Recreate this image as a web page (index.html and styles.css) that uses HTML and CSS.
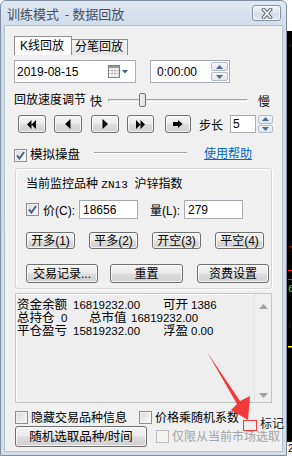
FILE: index.html
```html
<!DOCTYPE html>
<html lang="zh-CN">
<head>
<meta charset="utf-8">
<title>训练模式 - 数据回放</title>
<link rel="stylesheet" href="styles.css">
</head>
<body>
<div class="screen">
  <div class="window">
    <div class="titlebar">
      <span class="title">训练模式  - 数据回放</span>
      <span class="close">
        <svg width="14" height="11" viewBox="0 0 14 11"><path d="M3.5 1.5 L10.5 9.5 M10.5 1.5 L3.5 9.5" stroke="#5f6b7b" stroke-width="3.8" stroke-linecap="round" fill="none"/><path d="M3.5 1.5 L10.5 9.5 M10.5 1.5 L3.5 9.5" stroke="#f7f8fa" stroke-width="1.8" stroke-linecap="round" fill="none"/></svg>
      </span>
    </div>
    <div class="client">
      <div class="tabs">
        <div class="tab active">K线回放</div>
        <div class="tab">分笔回放</div>
      </div>

      <div class="row datetime">
        <div class="field date">
          <span class="val">2019-08-15</span>
          <svg class="cal" width="22" height="14" viewBox="0 0 22 14">
            <rect x="0.5" y="0.5" width="11" height="12" fill="#fff" stroke="#7d7d7d"/>
            <rect x="1" y="1" width="10" height="2" fill="#9a9a9a"/>
            <path d="M1 5.5 H11 M1 8.5 H11 M4 3 V12.5 M7 3 V12.5 M10 3 V12.5" stroke="#c2c2c2" stroke-width="1"/>
            <path d="M14 5 L20 5 L17 8.5 Z" fill="#3d5f94"/>
          </svg>
        </div>
        <div class="field time">
          <span class="val">0:00:00</span>
          <div class="spin">
            <span class="sb"><svg width="7" height="4" viewBox="0 0 7 4"><path d="M0 4 L3.5 0 L7 4 Z" fill="#4a6a97"/></svg></span>
            <span class="sb"><svg width="7" height="4" viewBox="0 0 7 4"><path d="M0 0 L7 0 L3.5 4 Z" fill="#4a6a97"/></svg></span>
          </div>
        </div>
      </div>

      <div class="row speed">
        <span class="lbl">回放速度调节</span>
        <span class="fast">快</span>
        <div class="slider"><span class="track"></span><span class="thumb"></span></div>
        <span class="slow">慢</span>
      </div>

      <div class="row play">
        <span class="btn pb b1"><svg width="10" height="9" viewBox="0 0 10 9"><path d="M0 4.5 L4.5 0 V9 Z M4.5 4.5 L9 0 V9 Z" fill="#000"/></svg></span>
        <span class="btn pb b2"><svg width="6" height="10" viewBox="0 0 6 10"><path d="M0 5 L5.5 0 V10 Z" fill="#000"/></svg></span>
        <span class="btn pb b3"><svg width="6" height="10" viewBox="0 0 6 10"><path d="M0.5 0 L6 5 L0.5 10 Z" fill="#000"/></svg></span>
        <span class="btn pb b4"><svg width="10" height="9" viewBox="0 0 10 9"><path d="M0 0 L4.5 4.5 L0 9 Z M4.5 0 L9 4.5 L4.5 9 Z" fill="#000"/></svg></span>
        <span class="btn pb b5"><svg width="10" height="8" viewBox="0 0 10 8"><path d="M0 2 H5 V0 L9.5 4 L5 8 V6 H0 Z" fill="#000"/></svg></span>
        <span class="steplbl">步长</span>
        <span class="field step"><span class="val">5</span></span>
        <div class="spin spin2">
          <span class="sb"><svg width="7" height="4" viewBox="0 0 7 4"><path d="M0 4 L3.5 0 L7 4 Z" fill="#4a6a97"/></svg></span>
          <span class="sb"><svg width="7" height="4" viewBox="0 0 7 4"><path d="M0 0 L7 0 L3.5 4 Z" fill="#4a6a97"/></svg></span>
        </div>
      </div>

      <div class="row sim">
        <span class="cb"><svg width="9" height="9" viewBox="0 0 9 9"><path d="M1 4.5 L3.5 7.5 L8 1" stroke="#4c6193" stroke-width="2" fill="none"/></svg></span>
        <span class="simlbl">模拟操盘</span>
        <span class="sep"></span>
        <span class="link">使用帮助</span>
      </div>

      <div class="group">
        <div class="gtitle">当前监控品种 <span class="code">ZN13</span>  沪锌指数</div>
        <div class="grow inputs">
          <span class="cb"><svg width="9" height="9" viewBox="0 0 9 9"><path d="M1 4.5 L3.5 7.5 L8 1" stroke="#4c6193" stroke-width="2" fill="none"/></svg></span>
          <span class="flbl">价(C):</span>
          <span class="field gin"><span class="val">18656</span></span>
          <span class="flbl vol">量(L):</span>
          <span class="field gin"><span class="val">279</span></span>
        </div>
        <div class="grow ops">
          <span class="btn op">开多(1)</span>
          <span class="btn op">平多(2)</span>
          <span class="btn op">开空(3)</span>
          <span class="btn op">平空(4)</span>
        </div>
        <div class="grow acts">
          <span class="btn act">交易记录...</span>
          <span class="btn act a2">重置</span>
          <span class="btn act a3">资费设置</span>
        </div>
      </div>

      <div class="log">
        <div class="logtext">
          <div class="ln"><span class="k w56">资金余额</span><span class="n w90">16819232.00</span><span class="k w28">可开</span><span class="n">1386</span></div>
          <div class="ln"><span class="k w44">总持仓</span><span class="n w28">0</span><span class="k w42">总市值</span><span class="n">16819232.00</span></div>
          <div class="ln"><span class="k w56">平仓盈亏</span><span class="n w90">15819232.00</span><span class="k w28">浮盈</span><span class="n">0.00</span></div>
        </div>
        <div class="vscroll">
          <svg width="9" height="5" viewBox="0 0 9 5"><path d="M0 5 L4.5 0 L9 5 Z" fill="#a2a2a2"/></svg>
          <svg width="9" height="5" viewBox="0 0 9 5"><path d="M0 0 L9 0 L4.5 5 Z" fill="#a2a2a2"/></svg>
        </div>
      </div>

      <div class="bottom">
        <div class="brow r1">
          <span class="cb"></span>
          <span class="blbl">隐藏交易品种信息</span>
          <span class="cb cb2"></span>
          <span class="blbl">价格乘随机系数</span>
        </div>
        <div class="brow r2">
          <span class="btn rand">随机选取品种/时间</span>
          <span class="cb dis"></span>
          <span class="blbl disl">仅限从当前市场选取</span>
        </div>
        <span class="mark">标记</span>
      </div>
    </div>
  </div>

  <div class="chart">
    <span class="m m1"></span>
    <span class="m m2"></span>
    <span class="m m3"></span>
    <span class="m m4"></span>
    <span class="six">6</span>
    <span class="m m5"></span>
    <span class="m m6"></span>
    <span class="m m7"></span>
    <span class="foot">2</span>
  </div>

  <svg class="annot" width="292" height="456" viewBox="0 0 292 456">
    <path d="M207 352 L240 401 L250 396 L248 420 L231 410 L237 404 Z" fill="#f23a3a"/>
    <rect x="243.5" y="420.5" width="13" height="10" fill="none" stroke="#f23a3a" stroke-width="1"/>
  </svg>
</div>
</body>
</html>
```

FILE: styles.css
```css
* { box-sizing: border-box; }

html, body {
  margin: 0;
  padding: 0;
}

body {
  width: 292px;
  height: 456px;
  overflow: hidden;
  background: #ffffff;
  font-family: "Liberation Sans", "Noto Sans CJK SC", sans-serif;
  font-size: 12px;
  color: #000;
}

.screen {
  position: relative;
  display: flex;
  width: 292px;
  height: 456px;
}

/* ---------- window frame ---------- */
.window {
  flex: none;
  width: 287px;
  height: 456px;
  display: flex;
  flex-direction: column;
  border: 1px solid #7f8d9f;
  border-radius: 6px 6px 0 0;
  background: linear-gradient(#dfe7f1, #cfdbe9 30px, #d3dde9);
}

.titlebar {
  height: 24px;
  display: flex;
  justify-content: space-between;
  align-items: flex-start;
  padding: 0 5px 0 6px;
}

.title {
  margin-top: 4px;
  line-height: 17px;
  font-family: "Noto Sans CJK SC", sans-serif;
  font-size: 13px;
  color: #44505f;
  white-space: pre;
}

.close {
  margin-top: 4px;
  width: 29px;
  height: 16px;
  border: 1px solid #8593a6;
  border-radius: 3px;
  background: linear-gradient(#f1f4f8, #dfe5ee 50%, #d3dbe6 51%, #e3e8ef);
  box-shadow: inset 0 0 0 1px rgba(255,255,255,0.6);
  display: flex;
  align-items: center;
  justify-content: center;
}

.client {
  flex: 1;
  margin: 0 3px 3px 3px;
  background: #f0f0f0;
  border: 1px solid #b3bfcd;
  padding: 0 10px 0 9px;
  display: flex;
  flex-direction: column;
  position: relative;
}

.row {
  display: flex;
  align-items: center;
  white-space: nowrap;
}

.row > * {
  flex: none;
}

/* ---------- tabs ---------- */
.tabs {
  margin-top: 10px;
  height: 19px;
  display: flex;
  align-items: flex-end;
}

.tab {
  height: 16px;
  width: 56px;
  border: 1px solid #8c8e94;
  border-bottom: none;
  border-left: none;
  background: linear-gradient(#f3f3f3, #e6e6e6);
  line-height: 15px;
  padding-left: 3px;
  font-size: 12px;
}

.tab.active {
  height: 19px;
  width: 58px;
  border-left: 1px solid #8c8e94;
  background: #fff;
  line-height: 18px;
  padding-left: 5px;
}

/* ---------- fields ---------- */
.field {
  background: #fff;
  border: 1px solid #abadb3;
  border-top-color: #a3a6ad;
  display: flex;
  align-items: center;
}

.val {
  line-height: 14px;
}

.datetime {
  margin-top: 5px;
  height: 23px;
}

.date {
  width: 122px;
  height: 23px;
  padding-left: 2px;
}

.cal {
  margin-left: auto;
  margin-right: 5px;
}

.time {
  margin-left: 14px;
  width: 80px;
  height: 23px;
  padding-left: 6px;
}

.spin {
  margin-left: auto;
  margin-right: 1px;
  width: 17px;
  height: 19px;
  display: flex;
  flex-direction: column;
  gap: 1px;
}

.sb {
  flex: 1;
  border: 1px solid #b4bcc8;
  border-radius: 2px;
  background: linear-gradient(#f4f6f9, #e1e6ed);
  display: flex;
  align-items: center;
  justify-content: center;
}

/* ---------- speed ---------- */
.speed {
  margin-top: 9px;
  height: 16px;
}

.lbl {
  line-height: 16px;
}

.fast {
  margin-left: 4px;
}

.slider {
  position: relative;
  margin-left: 6px;
  width: 140px;
  height: 16px;
  display: flex;
  align-items: center;
}

.track {
  width: 100%;
  height: 3px;
  border-top: 1px solid #a4a4a4;
  border-left: 1px solid #a4a4a4;
  border-bottom: 1px solid #ffffff;
  border-right: 1px solid #ffffff;
  background: #e7e7e7;
}

.thumb {
  position: absolute;
  left: 31px;
  top: 1px;
  width: 7px;
  height: 14px;
  border: 1px solid #707070;
  border-radius: 2px;
  background: linear-gradient(90deg, #f4f4f4, #dcdcdc);
}

.slow {
  margin-left: 10px;
}

/* ---------- buttons ---------- */
.btn {
  border: 1px solid #707070;
  border-radius: 3px;
  background: linear-gradient(#f4f4f4 0%, #ebebeb 48%, #dddddd 52%, #cfcfcf 100%);
  box-shadow: inset 0 0 0 1px rgba(255,255,255,0.75);
  display: flex;
  align-items: center;
  justify-content: center;
  line-height: 14px;
  white-space: pre;
  flex: none;
}

.play {
  margin-top: 7px;
  height: 18px;
}

.pb {
  width: 28px;
  height: 18px;
}

.b1 { margin-left: 4px; }
.b2 { margin-left: 8px; }
.b3 { margin-left: 9px; }
.b4 { margin-left: 8px; width: 27px; }
.b5 { margin-left: 11px; width: 26px; }

.steplbl {
  margin-left: 8px;
}

.step {
  margin-left: 7px;
  width: 26px;
  height: 18px;
  padding-left: 2px;
}

.spin2 {
  margin-left: 2px;
  width: 15px;
  height: 18px;
}

/* ---------- checkbox ---------- */
.cb {
  flex: none;
  width: 13px;
  height: 13px;
  border: 1px solid #8e8f8f;
  background: linear-gradient(135deg, #d9d9d9, #fafafa);
  box-shadow: inset 0 0 0 1px #f2f2f2;
  display: flex;
  align-items: center;
  justify-content: center;
}

.sim {
  margin-top: 14px;
  height: 16px;
}

.simlbl {
  margin-left: 3px;
  line-height: 16px;
  font-size: 12.5px;
}

.sep {
  margin-left: 14px;
  width: 93px;
  height: 2px;
  border-top: 1px solid #a0a0a0;
  border-bottom: 1px solid #ffffff;
  align-self: flex-start;
  margin-top: 5px;
}

.link {
  margin-left: 17px;
  color: #0066cc;
  text-decoration: underline;
  align-self: flex-start;
  line-height: 14px;
}

/* ---------- group ---------- */
.group {
  margin-top: 5px;
  margin-left: 1px;
  width: 257px;
  height: 121px;
  border: 1px solid #d5d5d5;
  border-radius: 3px;
  box-shadow: inset 1px 1px 0 #ffffff, 1px 1px 0 #ffffff;
  padding: 0 0 0 10px;
  display: flex;
  flex-direction: column;
}

.gtitle {
  margin-top: 8px;
  line-height: 15px;
  white-space: pre;
}

.code {
  font-family: "Liberation Mono", monospace;
  font-size: 11px;
}

.grow {
  display: flex;
  align-items: center;
  white-space: nowrap;
}

.inputs {
  margin-top: 7px;
  height: 19px;
}

.flbl {
  margin-left: 4px;
}

.flbl.vol {
  margin-left: 12px;
}

.gin {
  margin-left: 4px;
  width: 59px;
  height: 19px;
  padding-left: 3px;
}

.ops {
  margin-top: 13px;
  height: 17px;
  gap: 14px;
}

.op {
  width: 49px;
  height: 17px;
}

.acts {
  margin-top: 15px;
  height: 19px;
}

.act {
  width: 72px;
  height: 19px;
}

.a2 { margin-left: 12px; width: 73px; }
.a3 { margin-left: 14px; }

/* ---------- log ---------- */
.log {
  margin-top: 4px;
  margin-left: 1px;
  width: 257px;
  height: 110px;
  border: 1px solid #c4c4c4;
  box-shadow: inset 1px 1px 0 #ffffff;
  background: #eeeeee;
  display: flex;
}

.logtext {
  flex: 1;
  padding: 3px 0 0 1px;
}

.ln {
  display: flex;
  align-items: baseline;
  height: 13px;
  line-height: 13px;
  white-space: nowrap;
}

.k {
  font-family: "Noto Sans CJK SC", sans-serif;
  font-size: 12.5px;
}

.n {
  font-size: 11.5px;
}

.w28 { width: 28px; }
.w42 { width: 42px; }
.w44 { width: 44px; }
.w56 { width: 56px; }
.w90 { width: 90px; }

.vscroll {
  width: 17px;
  display: flex;
  flex-direction: column;
  align-items: center;
  justify-content: space-between;
  padding: 10px 0 4px;
  border-left: 1px solid #e4e4e4;
  background: #efefef;
}

/* ---------- bottom ---------- */
.bottom {
  position: relative;
  display: flex;
  flex-direction: column;
}

.brow {
  display: flex;
  align-items: center;
  white-space: nowrap;
}

.r1 {
  margin-top: 8px;
  height: 13px;
  padding-left: 1px;
}

.blbl {
  margin-left: 3px;
  line-height: 14px;
  font-size: 12px;
}

.cb2 {
  margin-left: 12px;
}

.r2 {
  margin-top: 2px;
  height: 21px;
  padding-left: 1px;
}

.rand {
  width: 132px;
  height: 21px;
  font-size: 12.5px;
}

.cb.dis {
  margin-left: 9px;
  border-color: #bcbcbc;
  background: #f4f4f4;
  box-shadow: none;
}

.disl {
  color: #a3a3a3;
}

.mark {
  position: absolute;
  left: 246px;
  top: 14px;
  line-height: 14px;
  white-space: nowrap;
  color: #222;
}

/* ---------- chart strip ---------- */
.chart {
  flex: none;
  position: relative;
  width: 5px;
  height: 456px;
  overflow: hidden;
  background: linear-gradient(#ffffff 0, #ffffff 31px, #000000 31px, #000000 442px, #f4f4f4 442px);
}

.m {
  position: absolute;
  left: 1px;
  width: 4px;
  height: 1px;
  background: #ff2020;
}

.m1 { top: 45px; width: 1px; left: 3px; }
.m2 { top: 246px; width: 1px; left: 3px; }
.m3 { top: 270px; }
.m4 { top: 279px; }
.m5 { top: 326px; width: 1px; left: 2px; }
.m6 { top: 346px; background: #ffff00; }
.m7 { top: 347px; background: #00d000; }

.six {
  position: absolute;
  left: 1px;
  top: 283px;
  font-family: "Liberation Mono", monospace;
  font-size: 11px;
  line-height: 12px;
  color: #00ff00;
}

.foot {
  position: absolute;
  left: 1px;
  top: 443px;
  font-size: 10px;
  line-height: 12px;
  color: #000;
}

/* ---------- annotation ---------- */
.annot {
  position: absolute;
  left: 0;
  top: 0;
  pointer-events: none;
}
```
